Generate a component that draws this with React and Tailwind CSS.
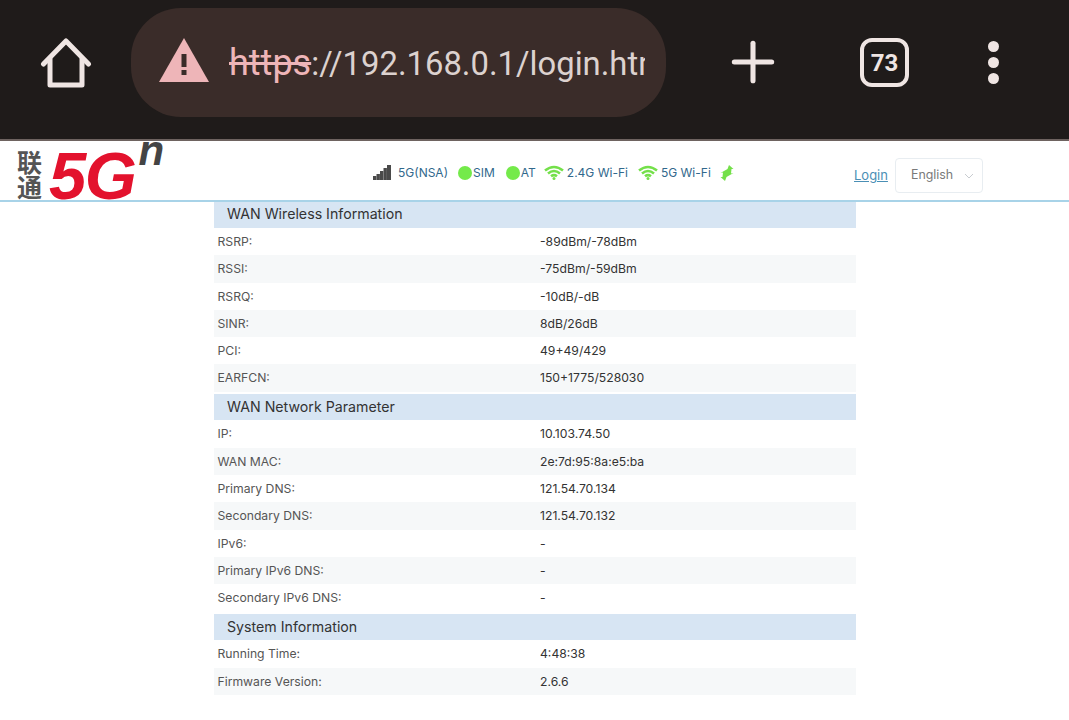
import { Plus } from "lucide-react";

const SECTIONS = [
  {
    title: "WAN Wireless Information",
    rows: [
      ["RSRP:", "-89dBm/-78dBm"],
      ["RSSI:", "-75dBm/-59dBm"],
      ["RSRQ:", "-10dB/-dB"],
      ["SINR:", "8dB/26dB"],
      ["PCI:", "49+49/429"],
      ["EARFCN:", "150+1775/528030"],
    ],
  },
  {
    title: "WAN Network Parameter",
    rows: [
      ["IP:", "10.103.74.50"],
      ["WAN MAC:", "2e:7d:95:8a:e5:ba"],
      ["Primary DNS:", "121.54.70.134"],
      ["Secondary DNS:", "121.54.70.132"],
      ["IPv6:", "-"],
      ["Primary IPv6 DNS:", "-"],
      ["Secondary IPv6 DNS:", "-"],
    ],
  },
  {
    title: "System Information",
    rows: [
      ["Running Time:", "4:48:38"],
      ["Firmware Version:", "2.6.6"],
    ],
  },
];

function WifiIcon() {
  return (
    <svg width="20" height="15" viewBox="0 0 20 15" fill="none" stroke="#74e04a" strokeWidth="2.6" className="shrink-0">
      <path d="M1 5.5 Q10 -1.5 19 5.5" />
      <path d="M4 8.5 Q10 3.5 16 8.5" />
      <path d="M7 11.2 Q10 9 13 11.2" />
      <circle cx="10" cy="13.5" r="1.5" fill="#74e04a" stroke="none" />
    </svg>
  );
}

function SignalIcon() {
  return (
    <svg width="18" height="15" viewBox="0 0 18 15" fill="#4a4a4a" className="shrink-0">
      <rect x="0" y="11" width="3.4" height="4" />
      <rect x="3.5" y="9" width="3.4" height="6" />
      <rect x="7" y="6" width="3.4" height="9" />
      <rect x="10.5" y="3" width="3.4" height="12" />
      <rect x="14" y="0" width="4" height="15" />
    </svg>
  );
}

function Dot() {
  return <span className="h-[14px] w-[14px] shrink-0 rounded-full bg-[#74ea4a]" />;
}

function Section({ title, rows }) {
  return (
    <div className="mb-[2.7px]">
      <div className="flex h-[26px] items-center bg-[#d7e5f3] pb-[2px] pl-[13px] text-[14.2px] text-[#333333]">
        {title}
      </div>
      {rows.map(([label, value], index) => (
        <div
          key={label}
          className={`flex h-[27.3px] items-center pt-[1px] pl-[3.5px] text-[12.2px] ${
            index % 2 === 1 ? "bg-[#f6f8f9]" : "bg-white"
          }`}
        >
          <div className="w-[322.5px] text-[#555555]">{label}</div>
          <div className="text-[#333333]">{value}</div>
        </div>
      ))}
    </div>
  );
}

export default function App() {
  return (
    <div className="min-h-[720px] overflow-hidden bg-white font-['Inter',sans-serif]">
      <div className="flex h-[141px] items-start border-b-2 border-[#6e6360] bg-[#1f1b1a] pt-[8px] text-[#efe5e3]">
        <div className="flex h-[109px] w-[131px] items-center justify-center">
          <svg width="52" height="52" viewBox="0 0 52 52" fill="none" stroke="#efe5e3" strokeWidth="5" strokeLinejoin="round" strokeLinecap="round">
            <path d="M3.5 27 L26 4 L48.5 27" />
            <path d="M10 22 V48 H42 V22" />
          </svg>
        </div>
        <div className="flex h-[109px] w-[535px] items-center overflow-hidden rounded-[50px] bg-[#3a2c29] pl-[28px] pr-[21px] font-['Roboto',sans-serif] text-[32.8px] text-[#dcd2cf]">
          <svg width="50" height="44" viewBox="0 0 50 44" className="mr-[20px] mb-[5px] shrink-0">
            <path d="M25 0 L50 44 L0 44 Z" fill="#eeb5b8" />
            <rect x="22.5" y="16" width="5" height="13" fill="#3a2c29" />
            <rect x="22.5" y="32" width="5" height="5" fill="#3a2c29" />
          </svg>
          <div className="overflow-hidden pt-[1px] whitespace-nowrap">
            <span className="text-[36px] text-[#eeb5b8] line-through">https</span>://192.168.0.1/login.html
          </div>
        </div>
        <div className="flex h-[109px] w-[175px] items-center justify-center">
          <Plus size={64} strokeWidth={1.9} className="-ml-[1px] -mt-[1px]" />
        </div>
        <div className="flex h-[109px] items-center">
          <div className="ml-[19px] flex h-[49px] w-[49px] items-center justify-center rounded-[12px] border-[4px] border-[#efe5e3] font-['Roboto',sans-serif] text-[24px] font-bold">
            73
          </div>
        </div>
        <div className="flex h-[109px] flex-col justify-center gap-[5px] pl-[79px]">
          <span className="h-[11px] w-[11px] rounded-full bg-[#efe5e3]" />
          <span className="h-[11px] w-[11px] rounded-full bg-[#efe5e3]" />
          <span className="h-[11px] w-[11px] rounded-full bg-[#efe5e3]" />
        </div>
      </div>

      <div className="flex h-[61px] border-b-2 border-[#a8d3e8]">
        <div className="flex w-[373px] items-start pl-[17px]">
          <div className="mt-[8px] w-[26px] font-['Noto_Sans_CJK_SC',sans-serif] text-[25px] leading-[25px] font-bold text-[#555555]">
            联通
          </div>
          <div className="mt-[4px] ml-[6px] font-['Liberation_Sans',sans-serif] text-[67px] leading-[62px] font-bold tracking-[-1.5px] text-[#e3122d] italic">
            5G
          </div>
          <div className="-mt-[8px] ml-[3px] font-['Liberation_Sans',sans-serif] text-[42px] leading-[36px] font-bold text-[#444444] italic">
            n
          </div>
        </div>
        <div className="flex h-[58px] w-[360px] shrink-0 items-center pt-[5px] text-[12px] whitespace-nowrap text-[#31688c]">
          <SignalIcon />
          <span className="ml-[7px]">5G(NSA)</span>
          <span className="ml-[10px] flex items-center gap-[1px]"><Dot />SIM</span>
          <span className="ml-[11px] flex items-center gap-[1px]"><Dot />AT</span>
          <span className="ml-[8px] flex items-center gap-[3px]"><WifiIcon />2.4G Wi-Fi</span>
          <span className="ml-[10px] flex items-center gap-[3px]"><WifiIcon />5G Wi-Fi</span>
          <svg width="14" height="16" viewBox="0 0 14 16" fill="#74e04a" className="ml-[9px] shrink-0">
            <path d="M9 0 L13.5 4 L11.5 4 L11 8.5 L13.5 8 L6.5 12 L5 16 L0.5 12 L2.5 12 L3 7.5 L0.5 8 L7.5 4 Z" />
          </svg>
        </div>
        <div className="ml-[121px] flex h-[58px] shrink-0 items-center gap-[7px] pt-[10px]">
          <a className="pt-[1px] text-[13px] text-[#4a8fb5] underline">Login</a>
          <div className="flex h-[35px] w-[88px] items-center rounded-[4px] border border-[#e8edf1] pt-[1px] pl-[15px] text-[12.4px] text-[#7a7a7a]">
            English
            <svg width="10" height="6" viewBox="0 0 10 6" fill="none" stroke="#c8ccd0" className="ml-[11px]">
              <path d="M1 1 L5 5 L9 1" />
            </svg>
          </div>
        </div>
      </div>

      <div className="ml-[214px] w-[642px]">
        {SECTIONS.map((section) => (
          <Section key={section.title} {...section} />
        ))}
      </div>
    </div>
  );
}
